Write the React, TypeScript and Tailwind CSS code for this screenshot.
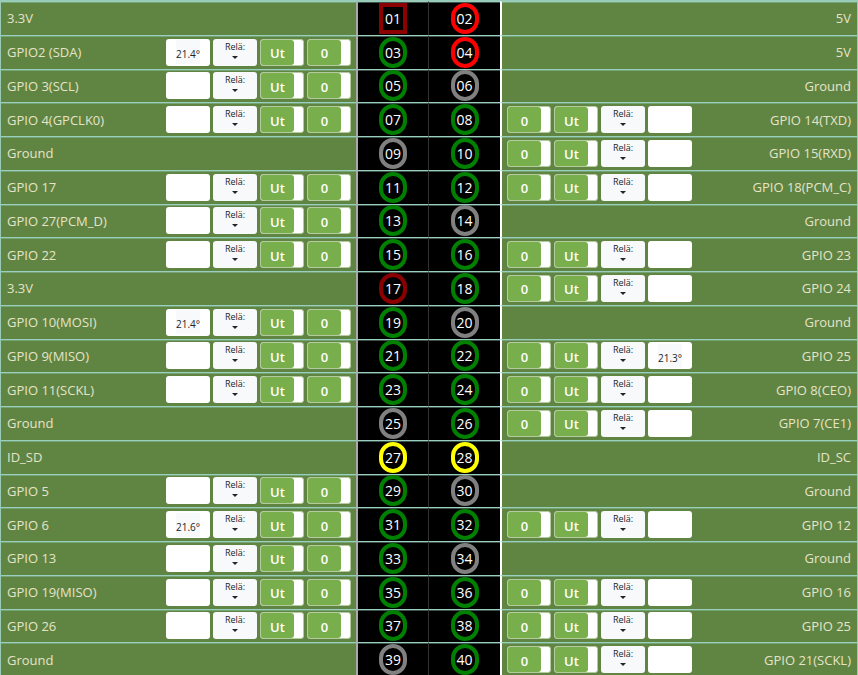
type PinKind = "square" | "v3" | "v5" | "gpio" | "ground" | "id";

type Side = {
  label: string;
  kind: PinKind;
  temp?: string;
};

const v3: Side = { label: "3.3V", kind: "v3" };
const v5: Side = { label: "5V", kind: "v5" };
const ground: Side = { label: "Ground", kind: "ground" };
const gpio = (label: string, temp?: string): Side => ({ label, kind: "gpio", temp });

const rows: [Side, Side][] = [
  [{ label: "3.3V", kind: "square" }, v5],
  [gpio("GPIO2 (SDA)", "21.4°"), v5],
  [gpio("GPIO 3(SCL)"), ground],
  [gpio("GPIO 4(GPCLK0)"), gpio("GPIO 14(TXD)")],
  [ground, gpio("GPIO 15(RXD)")],
  [gpio("GPIO 17"), gpio("GPIO 18(PCM_C)")],
  [gpio("GPIO 27(PCM_D)"), ground],
  [gpio("GPIO 22"), gpio("GPIO 23")],
  [v3, gpio("GPIO 24")],
  [gpio("GPIO 10(MOSI)", "21.4°"), ground],
  [gpio("GPIO 9(MISO)"), gpio("GPIO 25", "21.3°")],
  [gpio("GPIO 11(SCKL)"), gpio("GPIO 8(CEO)")],
  [ground, gpio("GPIO 7(CE1)")],
  [{ label: "ID_SD", kind: "id" }, { label: "ID_SC", kind: "id" }],
  [gpio("GPIO 5"), ground],
  [gpio("GPIO 6", "21.6°"), gpio("GPIO 12")],
  [gpio("GPIO 13"), ground],
  [gpio("GPIO 19(MISO)"), gpio("GPIO 16")],
  [gpio("GPIO 26"), gpio("GPIO 25")],
  [ground, gpio("GPIO 21(SCKL)")],
];

const ring: Record<PinKind, string> = {
  square: "border-[#8b0000]",
  v3: "border-[#8b0000] rounded-[14px]",
  v5: "border-[#ff0000] rounded-[14px]",
  gpio: "border-[#008000] rounded-[14px]",
  ground: "border-[#808080] rounded-[14px]",
  id: "border-[#ffff00] rounded-[14px]",
};

function Pin({ number, kind }: { number: number; kind: PinKind }) {
  return (
    <span
      className={`mx-auto flex h-[31px] w-7 items-center justify-center border-4 pt-px text-sm leading-4 text-white ${ring[kind]}`}
    >
      {String(number).padStart(2, "0")}
    </span>
  );
}

function Toggle({ text, name }: { text: string; name: string }) {
  return (
    <button
      type="button"
      role="switch"
      aria-checked="true"
      aria-label={name}
      className="flex h-[27px] w-11 overflow-hidden rounded-[3px] border border-[#b4cba0] bg-white"
    >
      <span className="flex h-full w-[33px] items-center justify-center rounded-r-[3px] bg-[#78ae4b] pt-0.5 text-[13px] leading-4 font-semibold text-white">
        {text}
      </span>
    </button>
  );
}

function Controls({ side, reverse }: { side: Side; reverse: boolean }) {
  return (
    <div className={`flex gap-[3px] ${reverse ? "flex-row-reverse" : ""}`}>
      <output
        aria-label={`Temperatur ${side.label}`}
        className="flex h-[27px] w-11 items-center justify-center rounded-[3px] bg-white text-[10px] leading-5 text-[#212529]"
      >
        {side.temp && <span className="bg-[#f8f9fa] pt-1">{side.temp}</span>}
      </output>
      <button
        type="button"
        aria-haspopup="menu"
        className="flex h-[27px] w-11 flex-col items-center rounded-[3px] bg-[#f8f9fa] pt-0.5 text-[9px] leading-3 text-[#212529]"
      >
        Relä:
        <span className="mt-[3px] border-x-[3px] border-t-[3px] border-x-transparent border-t-[#212529]" />
      </button>
      <Toggle text="Ut" name={`Riktning ${side.label}`} />
      <Toggle text="0" name={`Värde ${side.label}`} />
    </div>
  );
}

function SideCell({ side, right = false }: { side: Side; right?: boolean }) {
  return (
    <td className={`bg-[#608543] p-0 ${right ? "border-l-2 border-l-white" : "border-r-2 border-r-[#a9a9a9]"}`}>
      <div
        className={`flex items-center justify-between ${right ? "flex-row-reverse pr-1.5 pl-[5px]" : "pr-[5px] pl-1.5"}`}
      >
        <span className="text-[13px] leading-4 text-[#e6e3c8]">{side.label}</span>
        {side.kind === "gpio" && <Controls side={side} reverse={right} />}
      </div>
    </td>
  );
}

export default function App() {
  return (
    <main className="min-h-screen bg-[#608543] font-['Open_Sans','Noto_Sans',sans-serif]">
      <table className="h-[676px] w-full table-fixed border-separate border-spacing-0 border-x border-t border-[#99cab5]">
        <colgroup>
          <col />
          <col className="w-[71px]" />
          <col className="w-[71px]" />
          <col />
        </colgroup>
        <tbody>
          {rows.map(([left, right], i) => (
            <tr
              key={i}
              className="[&>td]:border-t [&>td]:border-t-[#99cfbf] [&>td]:shadow-[inset_0_1px_0_#99cfbf66]"
            >
              <SideCell side={left} />
              <td className="border-r border-r-[#333333] bg-black p-0">
                <Pin number={i * 2 + 1} kind={left.kind} />
              </td>
              <td className="bg-black p-0">
                <Pin number={i * 2 + 2} kind={right.kind} />
              </td>
              <SideCell side={right} right />
            </tr>
          ))}
        </tbody>
      </table>
    </main>
  );
}
